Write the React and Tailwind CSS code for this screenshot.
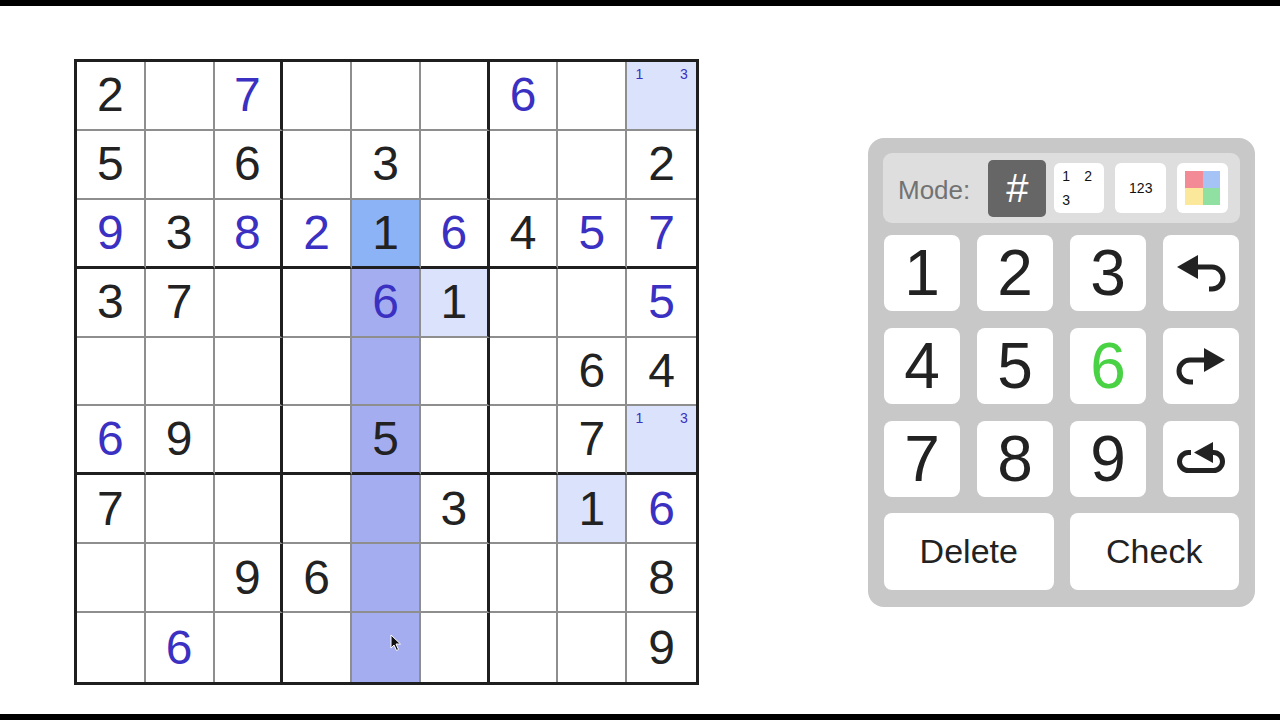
import { useState } from "react";

// "7b" = entered by the player (blue), "7" = given clue, "n13" = pencil notes
const BOARD = [
  ["2", "", "7b", "", "", "", "6b", "", "n13"],
  ["5", "", "6", "", "3", "", "", "", "2"],
  ["9b", "3", "8b", "2b", "1", "6b", "4", "5b", "7b"],
  ["3", "7", "", "", "6b", "1", "", "", "5b"],
  ["", "", "", "", "", "", "", "6", "4"],
  ["6b", "9", "", "", "5", "", "", "7", "n13"],
  ["7", "", "", "", "", "3", "", "1", "6b"],
  ["", "", "9", "6", "", "", "", "", "8"],
  ["", "6b", "", "", "", "", "", "", "9"],
];

const HIGHLIGHT = {
  "0-8": "peer",
  "2-4": "selected",
  "3-4": "column",
  "3-5": "peer",
  "4-4": "column",
  "5-4": "column",
  "5-8": "peer",
  "6-4": "column",
  "6-7": "peer",
  "7-4": "column",
  "8-4": "column",
};

const BG = {
  selected: "bg-[#8db3f7]",
  column: "bg-[#a4adf0]",
  peer: "bg-[#dae3fb]",
};

function rightBorder(c) {
  if (c === 8) return "";
  if (c === 2 || c === 5) return "border-r-[3px] border-r-[#1f1f1f]";
  return "border-r-2 border-r-[#8e8e8e]";
}

function bottomBorder(r) {
  if (r === 8) return "";
  if (r === 2 || r === 5) return "border-b-[3px] border-b-[#1f1f1f]";
  return "border-b-2 border-b-[#8e8e8e]";
}

function Cursor() {
  return (
    <svg
      className="absolute left-[38px] top-[21px]"
      width="12"
      height="18"
      viewBox="0 0 12 18"
    >
      <path
        d="M1 1 L1 14 L4 11 L6.5 16.5 L8.5 15.5 L6 10 L10.5 10 Z"
        fill="#111"
        stroke="#fff"
        strokeWidth="1"
      />
    </svg>
  );
}

function Cell({ value, r, c }) {
  const hl = HIGHLIGHT[`${r}-${c}`];
  const isNotes = value.startsWith("n");
  const isUser = value.endsWith("b");
  const digit = isNotes ? "" : value.replace("b", "");
  const notes = isNotes ? value.slice(1).split("") : [];

  return (
    <div
      className={`relative flex items-center justify-center ${rightBorder(c)} ${bottomBorder(r)} ${hl ? BG[hl] : "bg-white"}`}
    >
      {digit && (
        <span
          className={`text-[48px] leading-none ${isUser ? "text-[#3a30c2]" : "text-[#222]"}`}
        >
          {digit}
        </span>
      )}
      {isNotes && (
        <div className="absolute inset-0 grid grid-cols-3 grid-rows-3 px-[1px] pt-[1px]">
          {["1", "2", "3", "4", "5", "6", "7", "8", "9"].map((n) => (
            <span
              key={n}
              className="flex items-center justify-center text-[14px] leading-none text-[#3a30c2]"
            >
              {notes.includes(n) ? n : ""}
            </span>
          ))}
        </div>
      )}
      {r === 8 && c === 4 && <Cursor />}
    </div>
  );
}

function Board() {
  return (
    <div className="w-[625px] h-[626px] border-[3px] border-[#1f1f1f] grid grid-cols-9 grid-rows-9">
      {BOARD.map((row, r) =>
        row.map((v, c) => <Cell key={`${r}-${c}`} value={v} r={r} c={c} />)
      )}
    </div>
  );
}

function UndoIcon({ flip }) {
  return (
    <svg
      width="52"
      height="42"
      viewBox="0 0 52 42"
      className={flip ? "-scale-x-100" : ""}
    >
      <polygon points="2,15 23,3 23,27" fill="#222" />
      <path
        d="M20 15 H37 A11 11 0 0 1 37 37 H34"
        fill="none"
        stroke="#222"
        strokeWidth="5"
      />
    </svg>
  );
}

function ResetIcon() {
  return (
    <svg width="52" height="42" viewBox="0 0 52 42">
      <path
        d="M16 14.5 H13.5 A9 9 0 0 0 13.5 32.5 H38.5 A9 9 0 0 0 38.5 14.5 H33"
        fill="none"
        stroke="#222"
        strokeWidth="5"
      />
      <polygon points="19,14.5 38,4 38,25" fill="#222" />
    </svg>
  );
}

function Key({ children, className = "" }) {
  return (
    <button
      className={`h-[76px] rounded-[8px] bg-white flex items-center justify-center ${className}`}
    >
      {children}
    </button>
  );
}

function Pad() {
  const [mode] = useState("number");

  return (
    <div className="w-[387px] h-[469px] rounded-[16px] bg-[#c8c8c8] p-[15px]">
      <div className="h-[70px] rounded-[9px] bg-[#dedede] flex items-center pl-[15px]">
        <span className="pt-[4px] text-[26px] text-[#727272]">Mode:</span>
        <button
          className={`ml-[18px] w-[58px] h-[57px] rounded-[5px] flex items-center justify-center text-[40px] leading-none ${mode === "number" ? "bg-[#666] text-white" : "bg-white"}`}
        >
          #
        </button>
        <button className="ml-[8px] w-[50px] h-[50px] rounded-[6px] bg-white grid grid-cols-[22px_22px] grid-rows-[24px_24px] pl-[1px] pt-[1px] text-[14px] leading-none text-[#111]">
          <span className="flex items-center justify-center">1</span>
          <span className="flex items-center justify-center">2</span>
          <span className="flex items-center justify-center">3</span>
        </button>
        <button className="ml-[11px] w-[51px] h-[50px] rounded-[6px] bg-white flex items-center justify-center text-[14px] text-[#111]">
          123
        </button>
        <button className="ml-[11px] w-[51px] h-[50px] rounded-[6px] bg-white flex items-center justify-center">
          <div className="w-[35px] h-[34px] grid grid-cols-2 grid-rows-2">
            <div className="bg-[#f28b95]" />
            <div className="bg-[#a5c3f5]" />
            <div className="bg-[#fce89a]" />
            <div className="bg-[#8fe0a1]" />
          </div>
        </button>
      </div>

      <div className="mt-[12px] ml-[1px] w-[355px] grid grid-cols-4 gap-x-[17px] gap-y-[17px] text-[64px] leading-none text-[#222]">
        <Key>1</Key>
        <Key>2</Key>
        <Key>3</Key>
        <Key>
          <UndoIcon />
        </Key>
        <Key>4</Key>
        <Key>5</Key>
        <Key className="text-[#48d244]">6</Key>
        <Key>
          <UndoIcon flip />
        </Key>
        <Key>7</Key>
        <Key>8</Key>
        <Key>9</Key>
        <Key>
          <ResetIcon />
        </Key>
      </div>

      <div className="mt-[16px] ml-[1px] w-[355px] grid grid-cols-2 gap-x-[16px] text-[34px] text-[#222]">
        <Key className="h-[77px]">Delete</Key>
        <Key className="h-[77px]">Check</Key>
      </div>
    </div>
  );
}

export default function App() {
  return (
    <div className="w-[1280px] h-[720px] flex flex-col bg-white font-['Liberation_Sans',Arial,sans-serif]">
      <div className="h-[6px] bg-black" />
      <div className="flex-1 flex items-start">
        <div className="ml-[74px] mt-[53px]">
          <Board />
        </div>
        <div className="ml-[169px] mt-[132px]">
          <Pad />
        </div>
      </div>
      <div className="h-[6px] bg-black" />
    </div>
  );
}
